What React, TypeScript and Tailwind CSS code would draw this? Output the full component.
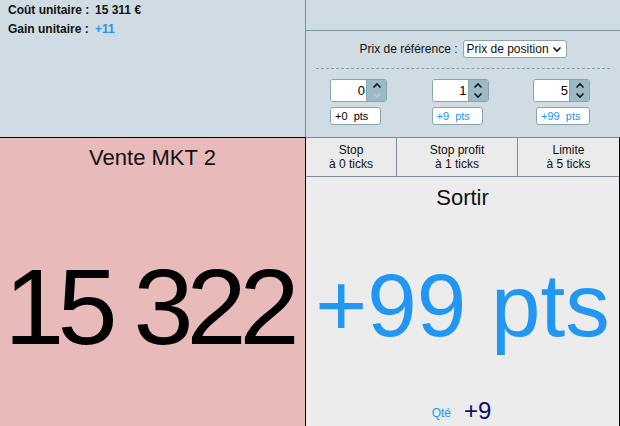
import React from "react";

const font = { fontFamily: '"Liberation Sans", Arial, sans-serif' };

function Chevron({ up, disabled }: { up?: boolean; disabled?: boolean }) {
  return (
    <svg width="10" height="7" viewBox="0 0 10 7">
      <path
        d={up ? "M1.5 5.5 L5 2 L8.5 5.5" : "M1.5 1.5 L5 5 L8.5 1.5"}
        fill="none"
        stroke={disabled ? "#b9cbd2" : "#111"}
        strokeWidth="1.6"
      />
    </svg>
  );
}

function Spinner({ value, downDisabled }: { value: string; downDisabled?: boolean }) {
  return (
    <div className="flex h-[23px] w-[57px] rounded-[3px] border border-[#8aa3ad] overflow-hidden">
      <div className="flex-1 bg-white flex items-center justify-end pr-[1px] text-[13px] text-black">
        {value}
      </div>
      <div className="w-[20px] bg-[#9cbac6] flex flex-col border-l border-[#8aa3ad]">
        <div className="flex-1 flex items-center justify-center">
          <Chevron up />
        </div>
        <div className="flex-1 flex items-center justify-center">
          <Chevron disabled={downDisabled} />
        </div>
      </div>
    </div>
  );
}

function Pts({ text, blue, w }: { text: string; blue?: boolean; w: string }) {
  return (
    <div
      className={`${w} h-[18px] bg-white border border-[#8aa3ad] rounded-[3px] flex items-center pl-[4px] text-[11px] whitespace-pre ${
        blue ? "text-[#2196f3]" : "text-black"
      }`}
    >
      {text}
    </div>
  );
}

export default function App() {
  return (
    <div className="w-[620px] h-[426px] flex flex-col overflow-hidden bg-[#cfdce3]" style={font}>
      {/* top row */}
      <div className="h-[137px] shrink-0 flex">
        <div className="w-[306px] shrink-0 border-r border-[#7a9099] pl-[8px] text-[12px] font-bold text-[#111] whitespace-nowrap">
          <div className="flex h-[19px] items-center">
            <span className="w-[87px]">Coût unitaire :</span>
            <span>15 311 €</span>
          </div>
          <div className="flex h-[19px] items-center">
            <span className="w-[87px]">Gain unitaire :</span>
            <span className="text-[#2196f3]">+11</span>
          </div>
        </div>
        <div className="flex-1 min-w-0 flex flex-col">
          <div className="h-[31px] shrink-0 border-b border-[#7a9099]" />
          <div className="flex-1 flex flex-col">
            <div className="flex items-center justify-center gap-[5px] mt-[9px] text-[12px] text-[#111] whitespace-nowrap">
              <span>Prix de référence :</span>
              <div className="h-[18px] w-[104px] bg-white border border-[#8aa3ad] rounded-[3px] flex items-center justify-between pl-[3px] pr-[4px]">
                <span>Prix de position</span>
                <Chevron />
              </div>
            </div>
            <div className="mx-[10px] mt-[10px] border-t border-dashed border-[#8a9ea6]" />
            <div className="flex justify-between pl-[24px] pr-[30px] mt-[10px]">
              <div className="flex flex-col gap-[5px]">
                <Spinner value="0" downDisabled />
                <Pts text="+0  pts" w="w-[51px]" />
              </div>
              <div className="flex flex-col gap-[5px]">
                <Spinner value="1" />
                <Pts text="+9  pts" blue w="w-[51px]" />
              </div>
              <div className="flex flex-col gap-[5px] items-end">
                <Spinner value="5" />
                <Pts text="+99  pts" blue w="w-[54px]" />
              </div>
            </div>
          </div>
        </div>
      </div>
      {/* bottom row */}
      <div className="flex-1 min-h-0 flex">
        <div className="w-[306px] shrink-0 bg-[#e9baba] border-t border-r border-black flex flex-col items-center overflow-hidden">
          <div className="text-[22px] text-[#111] mt-[6px] leading-[28px] whitespace-nowrap">Vente MKT 2</div>
          <div className="flex-1 flex items-center justify-center pt-[16px]">
            <span className="text-[108px] leading-none text-black tracking-[-7px] whitespace-nowrap pr-[8px]">15 322</span>
          </div>
        </div>
        <div className="flex-1 min-w-0 bg-[#ececec] border-t border-[#7a9099] border-r border-r-black flex flex-col">
          <div className="h-[39px] shrink-0 flex border-b border-[#7a9099] bg-[#ebebeb] text-[12px] text-[#111] leading-[14px] whitespace-nowrap">
            <div className="w-[91px] border-r border-[#7a9099] flex flex-col items-center justify-center">
              <span>Stop</span>
              <span>à 0 ticks</span>
            </div>
            <div className="w-[121px] border-r border-[#7a9099] flex flex-col items-center justify-center">
              <span>Stop profit</span>
              <span>à 1 ticks</span>
            </div>
            <div className="flex-1 flex flex-col items-center justify-center">
              <span>Limite</span>
              <span>à 5 ticks</span>
            </div>
          </div>
          <div className="text-center text-[22px] text-[#111] mt-[7px] leading-[28px]">Sortir</div>
          <div className="flex-1 flex items-center justify-center">
            <span className="text-[89px] leading-none text-[#2196f3] whitespace-nowrap">+99 pts</span>
          </div>
          <div className="flex items-end justify-center gap-[13px] pb-[2px] pr-[2px]">
            <span className="text-[12px] text-[#2196f3] mb-[2px]">Qté</span>
            <span className="text-[24px] leading-[26px] text-[#0d0d6b]">+9</span>
          </div>
        </div>
      </div>
    </div>
  );
}
